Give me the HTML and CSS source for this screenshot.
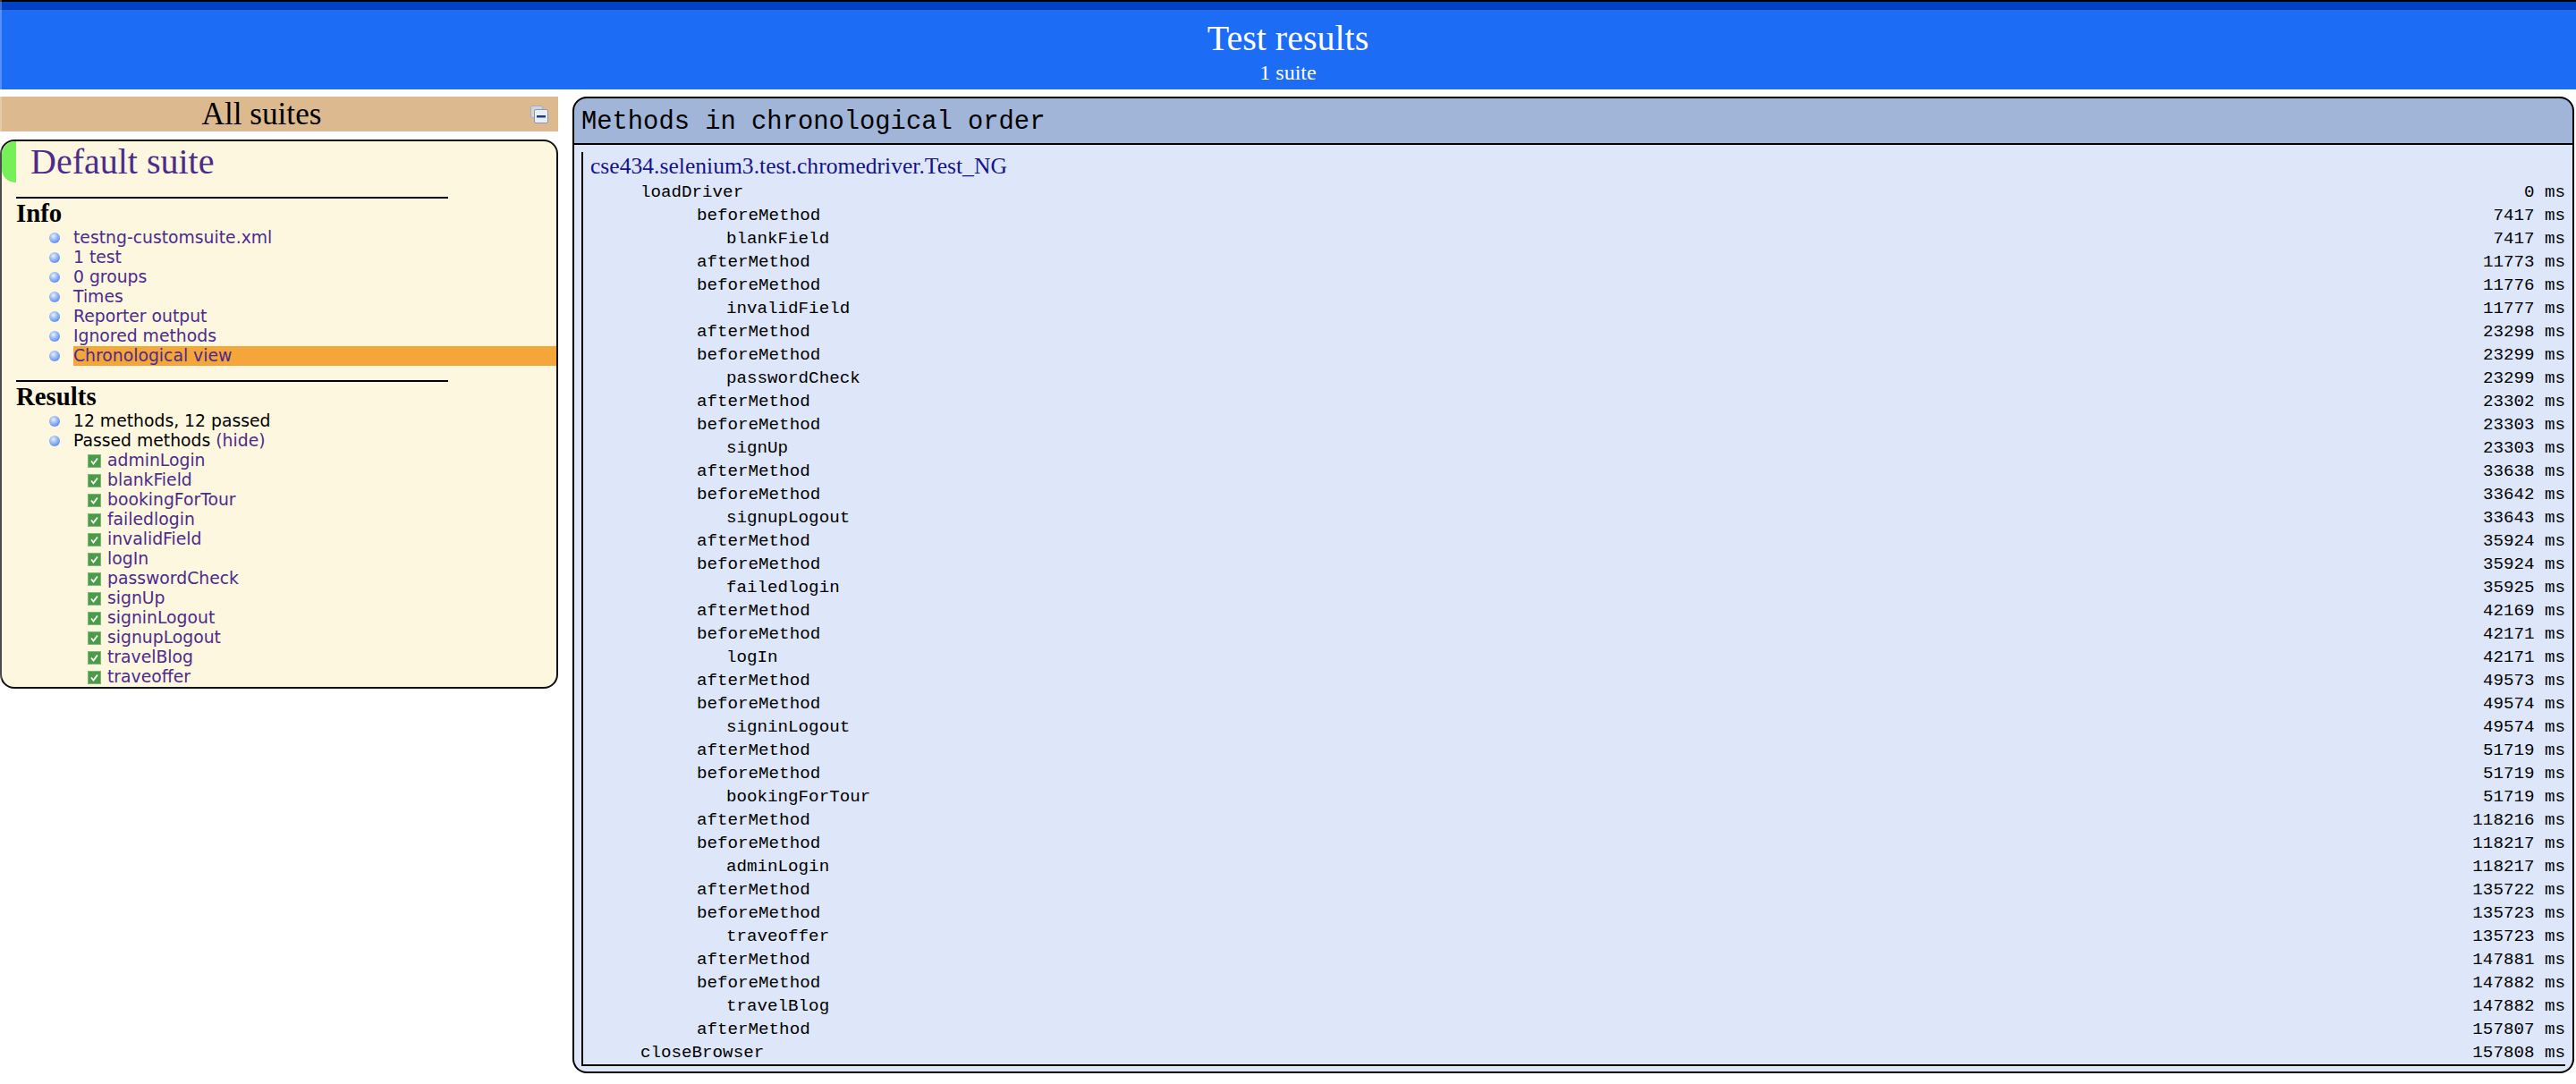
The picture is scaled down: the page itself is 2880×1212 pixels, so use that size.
FILE: index.html
```html
<!DOCTYPE html>
<html>
<head>
<meta charset="utf-8">
<title>TestNG reports</title>
<link rel="stylesheet" href="styles.css">
</head>
<body>
<div class="top-banner">
  <div class="top-strip"></div>
  <div class="banner-body">
    <div class="banner-title">Test results</div>
    <div class="banner-sub">1 suite</div>
  </div>
</div>
<div class="main">
  <div class="navigator">
    <div class="nav-header">
      <div class="nav-title">All suites</div>
      <div class="collapse-icon">
        <svg width="20" height="20" viewBox="0 0 20 20">
          <rect x="0.5" y="0.5" width="13" height="13" rx="1.5" fill="#cfd6e2" stroke="#a3aec0"/>
          <rect x="4.5" y="4.5" width="15" height="15" rx="1.5" fill="#e9eef6" stroke="#8a98ae"/>
          <rect x="7" y="11" width="10" height="2.5" fill="#1f3c7a"/>
        </svg>
      </div>
    </div>
    <div class="suite">
      <div class="suite-name">Default suite</div>
      <div class="suite-content">
        <div class="section-title">Info</div>
        <ul class="section-list">
          <li><a href="#">testng-customsuite.xml</a></li>
          <li><a href="#">1 test</a></li>
          <li><a href="#">0 groups</a></li>
          <li><a href="#">Times</a></li>
          <li><a href="#">Reporter output</a></li>
          <li><a href="#">Ignored methods</a></li>
          <li class="selected"><a href="#">Chronological view</a></li>
        </ul>
        <div class="section-title">Results</div>
        <ul class="section-list">
          <li>12 methods, 12 passed</li>
          <li>Passed methods <a href="#">(hide)</a>
            <div class="method-list">
              <div class="method-item"><svg class="check" viewBox="0 0 15 15"><rect width="15" height="15" fill="#4b9b49"/><rect x="0.5" y="0.5" width="14" height="14" fill="none" stroke="#7ab978"/><path d="M4 7.5 L6.5 10.5 L11 4.5" stroke="#fff" stroke-width="1.8" fill="none"/></svg><a href="#">adminLogin</a></div>
              <div class="method-item"><svg class="check" viewBox="0 0 15 15"><rect width="15" height="15" fill="#4b9b49"/><rect x="0.5" y="0.5" width="14" height="14" fill="none" stroke="#7ab978"/><path d="M4 7.5 L6.5 10.5 L11 4.5" stroke="#fff" stroke-width="1.8" fill="none"/></svg><a href="#">blankField</a></div>
              <div class="method-item"><svg class="check" viewBox="0 0 15 15"><rect width="15" height="15" fill="#4b9b49"/><rect x="0.5" y="0.5" width="14" height="14" fill="none" stroke="#7ab978"/><path d="M4 7.5 L6.5 10.5 L11 4.5" stroke="#fff" stroke-width="1.8" fill="none"/></svg><a href="#">bookingForTour</a></div>
              <div class="method-item"><svg class="check" viewBox="0 0 15 15"><rect width="15" height="15" fill="#4b9b49"/><rect x="0.5" y="0.5" width="14" height="14" fill="none" stroke="#7ab978"/><path d="M4 7.5 L6.5 10.5 L11 4.5" stroke="#fff" stroke-width="1.8" fill="none"/></svg><a href="#">failedlogin</a></div>
              <div class="method-item"><svg class="check" viewBox="0 0 15 15"><rect width="15" height="15" fill="#4b9b49"/><rect x="0.5" y="0.5" width="14" height="14" fill="none" stroke="#7ab978"/><path d="M4 7.5 L6.5 10.5 L11 4.5" stroke="#fff" stroke-width="1.8" fill="none"/></svg><a href="#">invalidField</a></div>
              <div class="method-item"><svg class="check" viewBox="0 0 15 15"><rect width="15" height="15" fill="#4b9b49"/><rect x="0.5" y="0.5" width="14" height="14" fill="none" stroke="#7ab978"/><path d="M4 7.5 L6.5 10.5 L11 4.5" stroke="#fff" stroke-width="1.8" fill="none"/></svg><a href="#">logIn</a></div>
              <div class="method-item"><svg class="check" viewBox="0 0 15 15"><rect width="15" height="15" fill="#4b9b49"/><rect x="0.5" y="0.5" width="14" height="14" fill="none" stroke="#7ab978"/><path d="M4 7.5 L6.5 10.5 L11 4.5" stroke="#fff" stroke-width="1.8" fill="none"/></svg><a href="#">passwordCheck</a></div>
              <div class="method-item"><svg class="check" viewBox="0 0 15 15"><rect width="15" height="15" fill="#4b9b49"/><rect x="0.5" y="0.5" width="14" height="14" fill="none" stroke="#7ab978"/><path d="M4 7.5 L6.5 10.5 L11 4.5" stroke="#fff" stroke-width="1.8" fill="none"/></svg><a href="#">signUp</a></div>
              <div class="method-item"><svg class="check" viewBox="0 0 15 15"><rect width="15" height="15" fill="#4b9b49"/><rect x="0.5" y="0.5" width="14" height="14" fill="none" stroke="#7ab978"/><path d="M4 7.5 L6.5 10.5 L11 4.5" stroke="#fff" stroke-width="1.8" fill="none"/></svg><a href="#">signinLogout</a></div>
              <div class="method-item"><svg class="check" viewBox="0 0 15 15"><rect width="15" height="15" fill="#4b9b49"/><rect x="0.5" y="0.5" width="14" height="14" fill="none" stroke="#7ab978"/><path d="M4 7.5 L6.5 10.5 L11 4.5" stroke="#fff" stroke-width="1.8" fill="none"/></svg><a href="#">signupLogout</a></div>
              <div class="method-item"><svg class="check" viewBox="0 0 15 15"><rect width="15" height="15" fill="#4b9b49"/><rect x="0.5" y="0.5" width="14" height="14" fill="none" stroke="#7ab978"/><path d="M4 7.5 L6.5 10.5 L11 4.5" stroke="#fff" stroke-width="1.8" fill="none"/></svg><a href="#">travelBlog</a></div>
              <div class="method-item"><svg class="check" viewBox="0 0 15 15"><rect width="15" height="15" fill="#4b9b49"/><rect x="0.5" y="0.5" width="14" height="14" fill="none" stroke="#7ab978"/><path d="M4 7.5 L6.5 10.5 L11 4.5" stroke="#fff" stroke-width="1.8" fill="none"/></svg><a href="#">traveoffer</a></div>
            </div>
          </li>
        </ul>
      </div>
    </div>
  </div>
  <div class="panel">
    <div class="panel-header">Methods in chronological order</div>
    <div class="panel-content">
      <div class="chrono-class">
        <div class="class-name">cse434.selenium3.test.chromedriver.Test_NG</div>
        <div class="row l0"><span>loadDriver</span><span class="time">0 ms</span></div>
        <div class="row l1"><span>beforeMethod</span><span class="time">7417 ms</span></div>
        <div class="row l2"><span>blankField</span><span class="time">7417 ms</span></div>
        <div class="row l1"><span>afterMethod</span><span class="time">11773 ms</span></div>
        <div class="row l1"><span>beforeMethod</span><span class="time">11776 ms</span></div>
        <div class="row l2"><span>invalidField</span><span class="time">11777 ms</span></div>
        <div class="row l1"><span>afterMethod</span><span class="time">23298 ms</span></div>
        <div class="row l1"><span>beforeMethod</span><span class="time">23299 ms</span></div>
        <div class="row l2"><span>passwordCheck</span><span class="time">23299 ms</span></div>
        <div class="row l1"><span>afterMethod</span><span class="time">23302 ms</span></div>
        <div class="row l1"><span>beforeMethod</span><span class="time">23303 ms</span></div>
        <div class="row l2"><span>signUp</span><span class="time">23303 ms</span></div>
        <div class="row l1"><span>afterMethod</span><span class="time">33638 ms</span></div>
        <div class="row l1"><span>beforeMethod</span><span class="time">33642 ms</span></div>
        <div class="row l2"><span>signupLogout</span><span class="time">33643 ms</span></div>
        <div class="row l1"><span>afterMethod</span><span class="time">35924 ms</span></div>
        <div class="row l1"><span>beforeMethod</span><span class="time">35924 ms</span></div>
        <div class="row l2"><span>failedlogin</span><span class="time">35925 ms</span></div>
        <div class="row l1"><span>afterMethod</span><span class="time">42169 ms</span></div>
        <div class="row l1"><span>beforeMethod</span><span class="time">42171 ms</span></div>
        <div class="row l2"><span>logIn</span><span class="time">42171 ms</span></div>
        <div class="row l1"><span>afterMethod</span><span class="time">49573 ms</span></div>
        <div class="row l1"><span>beforeMethod</span><span class="time">49574 ms</span></div>
        <div class="row l2"><span>signinLogout</span><span class="time">49574 ms</span></div>
        <div class="row l1"><span>afterMethod</span><span class="time">51719 ms</span></div>
        <div class="row l1"><span>beforeMethod</span><span class="time">51719 ms</span></div>
        <div class="row l2"><span>bookingForTour</span><span class="time">51719 ms</span></div>
        <div class="row l1"><span>afterMethod</span><span class="time">118216 ms</span></div>
        <div class="row l1"><span>beforeMethod</span><span class="time">118217 ms</span></div>
        <div class="row l2"><span>adminLogin</span><span class="time">118217 ms</span></div>
        <div class="row l1"><span>afterMethod</span><span class="time">135722 ms</span></div>
        <div class="row l1"><span>beforeMethod</span><span class="time">135723 ms</span></div>
        <div class="row l2"><span>traveoffer</span><span class="time">135723 ms</span></div>
        <div class="row l1"><span>afterMethod</span><span class="time">147881 ms</span></div>
        <div class="row l1"><span>beforeMethod</span><span class="time">147882 ms</span></div>
        <div class="row l2"><span>travelBlog</span><span class="time">147882 ms</span></div>
        <div class="row l1"><span>afterMethod</span><span class="time">157807 ms</span></div>
        <div class="row l0"><span>closeBrowser</span><span class="time">157808 ms</span></div>
      </div>
    </div>
  </div>
</div>
</body>
</html>
```

FILE: styles.css
```css
html, body {
  margin: 0;
  padding: 0;
  background: #ffffff;
}

body {
  font-family: "Liberation Serif", "Times New Roman", serif;
  color: #000;
}

body::after {
  content: "";
  position: fixed;
  left: 0;
  top: 0;
  width: 2px;
  height: 100%;
  background: rgba(255, 255, 255, 0.25);
  pointer-events: none;
}

a {
  color: #4d2b8c;
  text-decoration: none;
}

/* ---------- top banner ---------- */
.top-banner {
  height: 100px;
  box-sizing: border-box;
  border-top: 2px solid #000;
  background: #1d6cf6;
  color: #fff;
  text-align: center;
}

.top-strip {
  height: 9px;
  background: #0141c6;
  box-shadow: inset 0 -1px 0 #0a3aa6;
}

.banner-body {
  padding-top: 10px;
}

.banner-title {
  font-size: 40px;
  line-height: 44px;
}

.banner-sub {
  font-size: 24px;
  line-height: 27px;
  margin-top: 3px;
}

/* ---------- main layout ---------- */
.main {
  display: flex;
  align-items: flex-start;
  gap: 16px;
  padding: 8px 2px 0 0;
}

.navigator {
  width: 624px;
  flex: none;
}

.nav-header {
  display: flex;
  height: 39px;
  background: #dcb98f;
  margin-bottom: 9px;
}

.nav-title {
  flex: 1;
  text-align: center;
  font-size: 35.2px;
  line-height: 39px;
}

.collapse-icon {
  padding: 10px 11px 0 8px;
}

.collapse-icon svg {
  display: block;
}

/* ---------- suite box ---------- */
.suite {
  border: 2px solid #111;
  border-radius: 16px;
  background: #fef7df;
}

.suite-name {
  border-left: 16px solid #76ef58;
  border-radius: 15px 0 0 15px;
  padding-left: 16px;
  font-size: 40px;
  line-height: 46px;
  color: #4d2b8c;
}

.suite-content {
  margin-left: 16px;
}

.section-title {
  margin-top: 16px;
  width: 80%;
  border-top: 2px solid #000;
  font-size: 28.8px;
  font-weight: bold;
  line-height: 33px;
}

.section-list {
  margin: 0;
  padding-left: 64px;
  list-style: none;
  font-family: "DejaVu Sans", Verdana, sans-serif;
  font-size: 18.8px;
  line-height: 22px;
}

.section-list li {
  position: relative;
}

.section-list li::before {
  content: "";
  position: absolute;
  left: -27px;
  top: 5px;
  width: 12px;
  height: 12px;
  border-radius: 50%;
  background: radial-gradient(circle at 40% 35%, #eef4ff 0%, #a9c6fb 30%, #5d8fec 75%, #4a7ad8 100%);
}

.section-list li.selected {
  background: #f4a63b;
}

.method-list {
  margin-left: 16px;
}

.method-item {
  display: flex;
  align-items: center;
  height: 22px;
}

.check {
  width: 15px;
  height: 15px;
  margin-right: 7px;
  flex: none;
}

/* ---------- right panel ---------- */
.panel {
  flex: 1;
  min-width: 0;
}

.panel-header {
  border: 2px solid #000;
  border-radius: 16px 16px 0 0;
  background: #a1b5d8;
  padding: 10px 8px 7px;
  font-family: "Liberation Mono", "Courier New", monospace;
  font-size: 28.8px;
  line-height: 33px;
}

.panel-content {
  border: 2px solid #000;
  border-top: 0;
  border-radius: 0 0 16px 16px;
  background: #dee7f9;
  padding: 8px 8px 6px;
}

.chrono-class {
  border-left: 2px solid #000;
  border-bottom: 2px solid #000;
}

.class-name {
  color: #14148a;
  font-size: 25.6px;
  line-height: 32px;
  padding-left: 8px;
}

.row {
  display: flex;
  font-family: "Liberation Mono", "Courier New", monospace;
  font-size: 19.2px;
  line-height: 26px;
  white-space: pre;
}

.row .time {
  margin-left: auto;
}

.l0 {
  padding-left: 64px;
}

.l1 {
  padding-left: 127px;
}

.l2 {
  padding-left: 160px;
}
```
